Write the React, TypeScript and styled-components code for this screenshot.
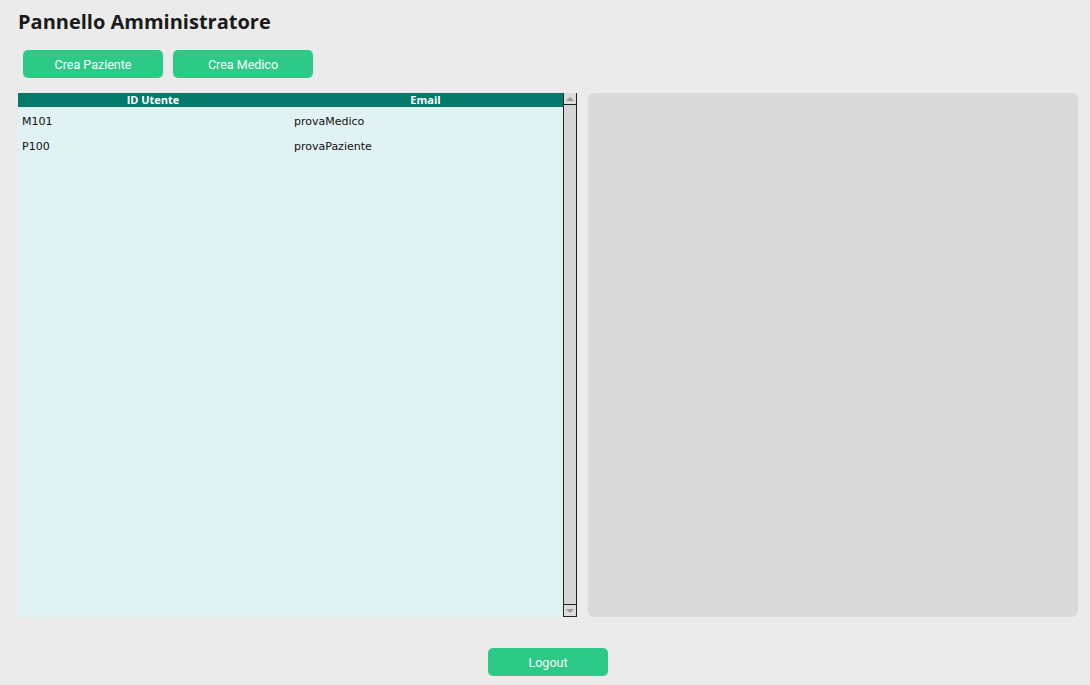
import { createGlobalStyle } from "styled-components";
import styled from "styled-components";

const GlobalStyle = createGlobalStyle`
  html, body {
    margin: 0;
    padding: 0;
    background: #ebebeb;
    font-family: "Open Sans", sans-serif;
  }
`;

const Page = styled.div`
  width: 1090px;
  height: 685px;
  box-sizing: border-box;
  padding: 8px 12px 0 18px;
  display: flex;
  flex-direction: column;
`;

const Title = styled.h1`
  margin: 0;
  font-family: "Open Sans", sans-serif;
  font-size: 20px;
  font-weight: 700;
  color: #1a1a1a;
  line-height: 28px;
`;

const Toolbar = styled.div`
  display: flex;
  gap: 10px;
  margin: 14px 0 15px 5px;
`;

const GreenButton = styled.button<{ $width?: number }>`
  width: ${(p) => p.$width ?? 140}px;
  height: 28px;
  border: none;
  border-radius: 5px;
  background: #2dc986;
  color: #ffffff;
  font-family: Roboto, sans-serif;
  font-size: 12.5px;
  padding: 0;
  cursor: pointer;
`;

const Main = styled.div`
  display: flex;
  gap: 11px;
  height: 524px;
`;

const TableBox = styled.div`
  width: 559px;
  display: flex;
  background: #e0f2f1;
`;

const TableBody = styled.div`
  flex: 1;
  display: flex;
  flex-direction: column;
`;

const HeaderRow = styled.div`
  display: grid;
  grid-template-columns: 270px 1fr;
  height: 14px;
  margin-bottom: 2px;
  background: #02796b;
  color: #ffffff;
  font-family: "Open Sans", sans-serif;
  font-size: 11px;
  font-weight: 700;
  line-height: 14px;
  text-align: center;
`;

const Row = styled.div`
  display: grid;
  grid-template-columns: 272px 1fr;
  height: 25px;
  align-items: center;
  padding-left: 4px;
  font-family: "DejaVu Sans", sans-serif;
  font-size: 11px;
  color: #111111;
`;

const ScrollBar = styled.div`
  width: 14px;
  box-sizing: border-box;
  border-left: 1px solid #222;
  border-right: 1px solid #222;
  border-bottom: 1px solid #222;
  background: #ffffff;
  display: flex;
  flex-direction: column;
`;

const ArrowButton = styled.div<{ $down?: boolean }>`
  height: 11px;
  background: #dcdcdc;
  display: flex;
  align-items: center;
  justify-content: center;
  border-top: ${(p) => (p.$down ? "1px solid #222" : "none")};
  border-bottom: ${(p) => (p.$down ? "none" : "1px solid #222")};
  &::after {
    content: "";
    border-left: 4px solid transparent;
    border-right: 4px solid transparent;
    ${(p) =>
      p.$down
        ? "border-top: 4px solid #999;"
        : "border-bottom: 4px solid #999;"}
  }
`;

const Thumb = styled.div`
  flex: 1;
  background: #d6d6d6;
`;

const SidePanel = styled.div`
  flex: 1;
  background: #dadada;
  border-radius: 6px;
`;

const Footer = styled.div`
  display: flex;
  justify-content: center;
  padding-top: 31px;
`;

const users = [
  { id: "M101", email: "provaMedico" },
  { id: "P100", email: "provaPaziente" },
];

export default function App() {
  return (
    <>
      <GlobalStyle />
      <Page>
        <Title>Pannello Amministratore</Title>
        <Toolbar>
          <GreenButton>Crea Paziente</GreenButton>
          <GreenButton>Crea Medico</GreenButton>
        </Toolbar>
        <Main>
          <TableBox>
            <TableBody>
              <HeaderRow>
                <span>ID Utente</span>
                <span>Email</span>
              </HeaderRow>
              {users.map((u) => (
                <Row key={u.id}>
                  <span>{u.id}</span>
                  <span>{u.email}</span>
                </Row>
              ))}
            </TableBody>
            <ScrollBar>
              <ArrowButton />
              <Thumb />
              <ArrowButton $down />
            </ScrollBar>
          </TableBox>
          <SidePanel />
        </Main>
        <Footer>
          <GreenButton $width={120}>Logout</GreenButton>
        </Footer>
      </Page>
    </>
  );
}
